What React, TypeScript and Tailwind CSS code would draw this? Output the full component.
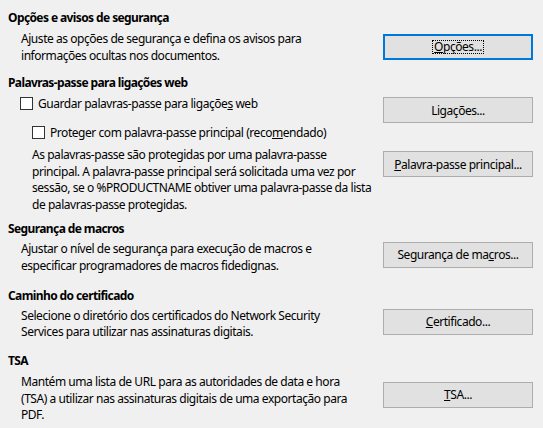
import type { ReactNode } from "react";

function Btn({ children, focused }: { children: ReactNode; focused?: boolean }) {
  return (
    <div
      className={
        "w-[150px] h-[26px] flex items-center justify-center text-[#000] whitespace-nowrap " +
        (focused ? "border-2 border-[#0078d7] bg-[#e1e1e1]" : "border border-[#adadad] bg-[#e1e1e1]")
      }
    >
      {focused ? (
        <span className="border border-dotted border-black px-px leading-[12px]">{children}</span>
      ) : (
        children
      )}
    </div>
  );
}

function Check({ children }: { children: ReactNode }) {
  return (
    <div className="flex items-center h-[17px] whitespace-nowrap">
      <span className="w-[13px] h-[13px] border border-[#333] bg-white mr-[5px]" />
      <span>{children}</span>
    </div>
  );
}

function Heading({ children, top }: { children: ReactNode; top: string }) {
  return <div className={"font-bold tracking-[-0.6px] h-[17px] pl-[8px] " + top}>{children}</div>;
}

export default function App() {
  return (
    <div
      className="w-[543px] h-[428px] bg-[#f0f0f0] text-[12px] leading-[17px] tracking-[-0.45px] text-black overflow-hidden"
      style={{ fontFamily: '"Segoe UI", "Noto Sans", sans-serif' }}
    >
      <Heading top="mt-[9px]">Opções e avisos de segurança</Heading>
      <div className="flex justify-between pr-[10px] mt-[4px]">
        <p className="pl-[21px] whitespace-nowrap">
          Ajuste as opções de segurança e defina os avisos para
          <br />
          informações ocultas nos documentos.
        </p>
        <div className="mt-[4px]">
          <Btn focused>
            <u>O</u>pções...
          </Btn>
        </div>
      </div>

      <Heading top="mt-[10px]">Palavras-passe para ligações web</Heading>
      <div className="flex justify-between pr-[10px] mt-[4px]">
        <div className="pl-[20px]">
          <Check>
            Guardar palavras-passe para ligaçõe<u>s</u> web
          </Check>
          <div className="pl-[12px] mt-[12px]">
            <Check>
              Proteger com palavra-passe principal (reco<u>m</u>endado)
            </Check>
            <p className="mt-[6px] leading-[16.7px] whitespace-nowrap">
              As palavras-passe são protegidas por uma palavra-passe
              <br />
              principal. A palavra-passe principal será solicitada uma vez por
              <br />
              sessão, se o %PRODUCTNAME obtiver uma palavra-passe da lista
              <br />
              de palavras-passe protegidas.
            </p>
          </div>
        </div>
        <div className="flex flex-col gap-[28px] mt-[2px]">
          <Btn>Ligações...</Btn>
          <Btn>
            <u>P</u>alavra-passe principal...
          </Btn>
        </div>
      </div>

      <Heading top="mt-[6px]">Segurança de macros</Heading>
      <div className="flex justify-between pr-[10px] mt-[3px]">
        <p className="pl-[21px] whitespace-nowrap">
          Ajustar o nível de segurança para execução de macros e
          <br />
          especificar programadores de macros fidedignas.
        </p>
        <div className="mt-[2px]">
          <Btn>
            Segurança de ma<u>c</u>ros...
          </Btn>
        </div>
      </div>

      <Heading top="mt-[13px]">Caminho do certificado</Heading>
      <div className="flex justify-between pr-[10px] mt-[4px]">
        <p className="pl-[21px] leading-[16.5px] whitespace-nowrap">
          Selecione o diretório dos certificados do Network Security
          <br />
          Services para utilizar nas assinaturas digitais.
        </p>
        <div className="mt-[1px]">
          <Btn>
            <u>C</u>ertificado...
          </Btn>
        </div>
      </div>

      <Heading top="mt-[11px]">TSA</Heading>
      <div className="flex justify-between pr-[10px] mt-[5px]">
        <p className="pl-[21px] leading-[16.7px] whitespace-nowrap">
          Mantém uma lista de URL para as autoridades de data e hora
          <br />
          (TSA) a utilizar nas assinaturas digitais de uma exportação para
          <br />
          PDF.
        </p>
        <div className="mt-[8px]">
          <Btn>
            <u>T</u>SA...
          </Btn>
        </div>
      </div>
    </div>
  );
}
